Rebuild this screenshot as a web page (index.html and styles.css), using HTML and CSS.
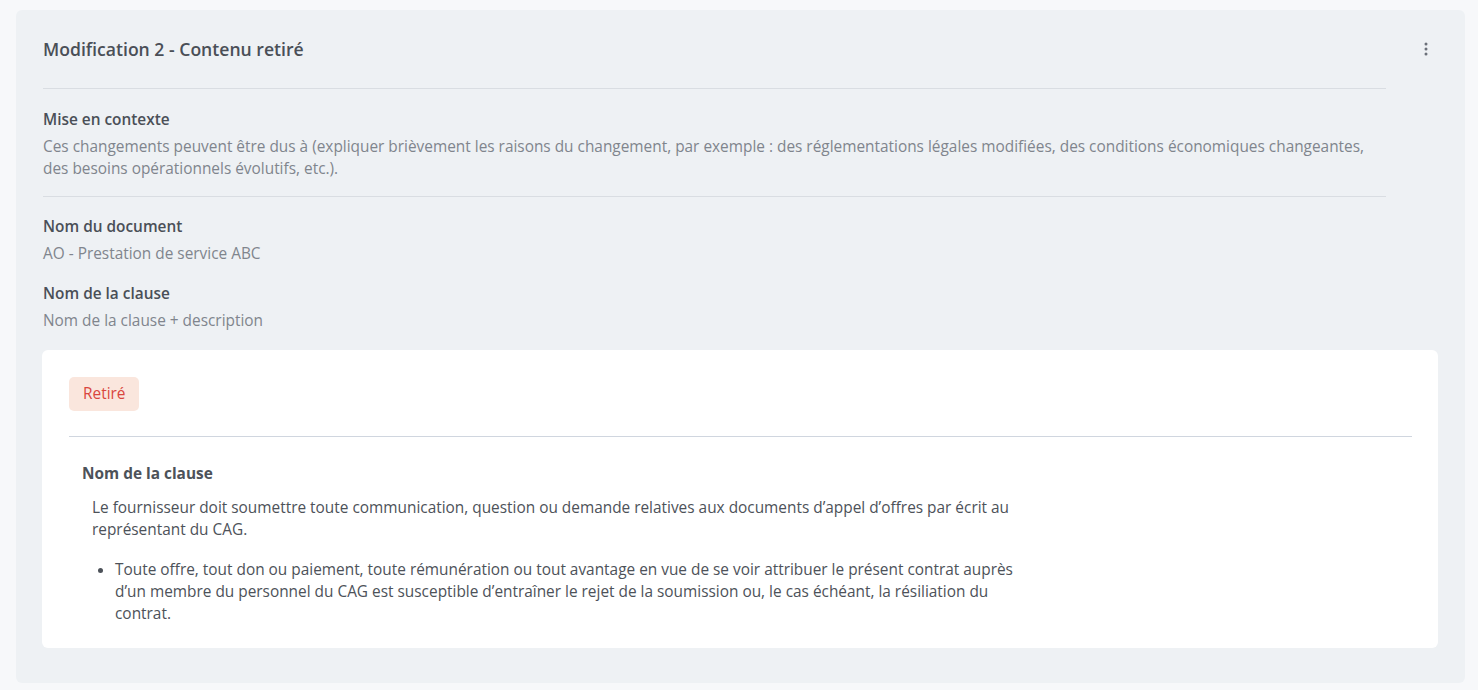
FILE: index.html
```html
<!DOCTYPE html>
<html lang="fr">
<head>
  <meta charset="UTF-8">
  <title>Modification 2 - Contenu retiré</title>
  <meta name="viewport" content="width=device-width, initial-scale=1.0">
  <link rel="stylesheet" href="styles.css">
</head>
<body>

<section class="modif">
  <div class="modif-top">
    <div class="infos">
      <h2 class="titre">Modification 2 - Contenu retiré</h2>
      <hr class="sep">
      <div class="champ">
        <div class="champ-label">Mise en contexte</div>
        <p class="champ-valeur">Ces changements peuvent être dus à (expliquer brièvement les raisons du changement, par exemple : des réglementations légales modifiées, des conditions économiques changeantes, des besoins opérationnels évolutifs, etc.).</p>
      </div>
      <hr class="sep sep-2">
      <div class="champ">
        <div class="champ-label">Nom du document</div>
        <p class="champ-valeur">AO - Prestation de service ABC</p>
      </div>
      <div class="champ champ-suite">
        <div class="champ-label">Nom de la clause</div>
        <p class="champ-valeur">Nom de la clause + description</p>
      </div>
    </div>
    <button class="menu" aria-label="Plus d'options">
      <svg width="4" height="14" viewBox="0 0 4 14"><circle cx="2" cy="2" r="1.5"/><circle cx="2" cy="7" r="1.5"/><circle cx="2" cy="12" r="1.5"/></svg>
    </button>
  </div>

  <div class="clause">
    <span class="badge">Retiré</span>
    <hr class="sep-clause">
    <h3 class="clause-titre">Nom de la clause</h3>
    <div class="clause-texte">
      <p>Le fournisseur doit soumettre toute communication, question ou demande relatives aux documents d’appel d’offres par écrit au représentant du CAG.</p>
      <ul>
        <li>Toute offre, tout don ou paiement, toute rémunération ou tout avantage en vue de se voir attribuer le présent contrat auprès d’un membre du personnel du CAG est susceptible d’entraîner le rejet de la soumission ou, le cas échéant, la résiliation du contrat.</li>
      </ul>
    </div>
  </div>
</section>

</body>
</html>
```

FILE: styles.css
```css
body {
  margin: 0;
  padding: 10px 13px 0 16px;
  background: #f7f8fa;
  font-family: 'Open Sans', sans-serif;
  font-size: 15.4px;
  line-height: 22px;
  color: #4d5259;
}
.modif {
  background: #eef1f4;
  border-radius: 6px;
  padding: 27px 27px 35px 26px;
}
.modif-top {
  display: flex;
  gap: 28px;
  padding-left: 1px;
}
.infos {
  flex: 1;
}
.titre {
  margin: 0;
  font-size: 17.6px;
  line-height: 24px;
  font-weight: 600;
  color: #4a4f57;
}
.sep {
  border: none;
  border-top: 1px solid #d9dde2;
  margin: 27px 0 20px;
}
.sep-2 {
  margin: 16px 0 19px;
}
.champ-label {
  font-weight: 600;
  color: #4a4f57;
  margin-bottom: 5px;
}
.champ-valeur {
  margin: 0;
  color: #80858d;
}
.champ-suite {
  margin-top: 18px;
}
.menu {
  width: 24px;
  height: 24px;
  padding: 0;
  border: none;
  background: none;
  display: flex;
  align-items: center;
  justify-content: center;
  cursor: pointer;
  fill: #6b7079;
}
.clause {
  margin-top: 18px;
  background: white;
  border-radius: 6px;
  padding: 27px 26px 23px 27px;
}
.badge {
  display: inline-block;
  padding: 6px 14px;
  border-radius: 5px;
  background: #fae6dd;
  color: #d9463e;
}
.sep-clause {
  border: none;
  border-top: 1px solid #d0d6df;
  margin: 25px 0 26px;
}
.clause-titre {
  margin: 0 0 12px 13px;
  font-size: 15.4px;
  line-height: 22px;
  font-weight: 700;
  color: #4d5259;
}
.clause-texte {
  margin-left: 23px;
  max-width: 935px;
}
.clause-texte p {
  margin: 0 0 18px;
}
.clause-texte ul {
  margin: 0;
  padding-left: 23px;
}
```
